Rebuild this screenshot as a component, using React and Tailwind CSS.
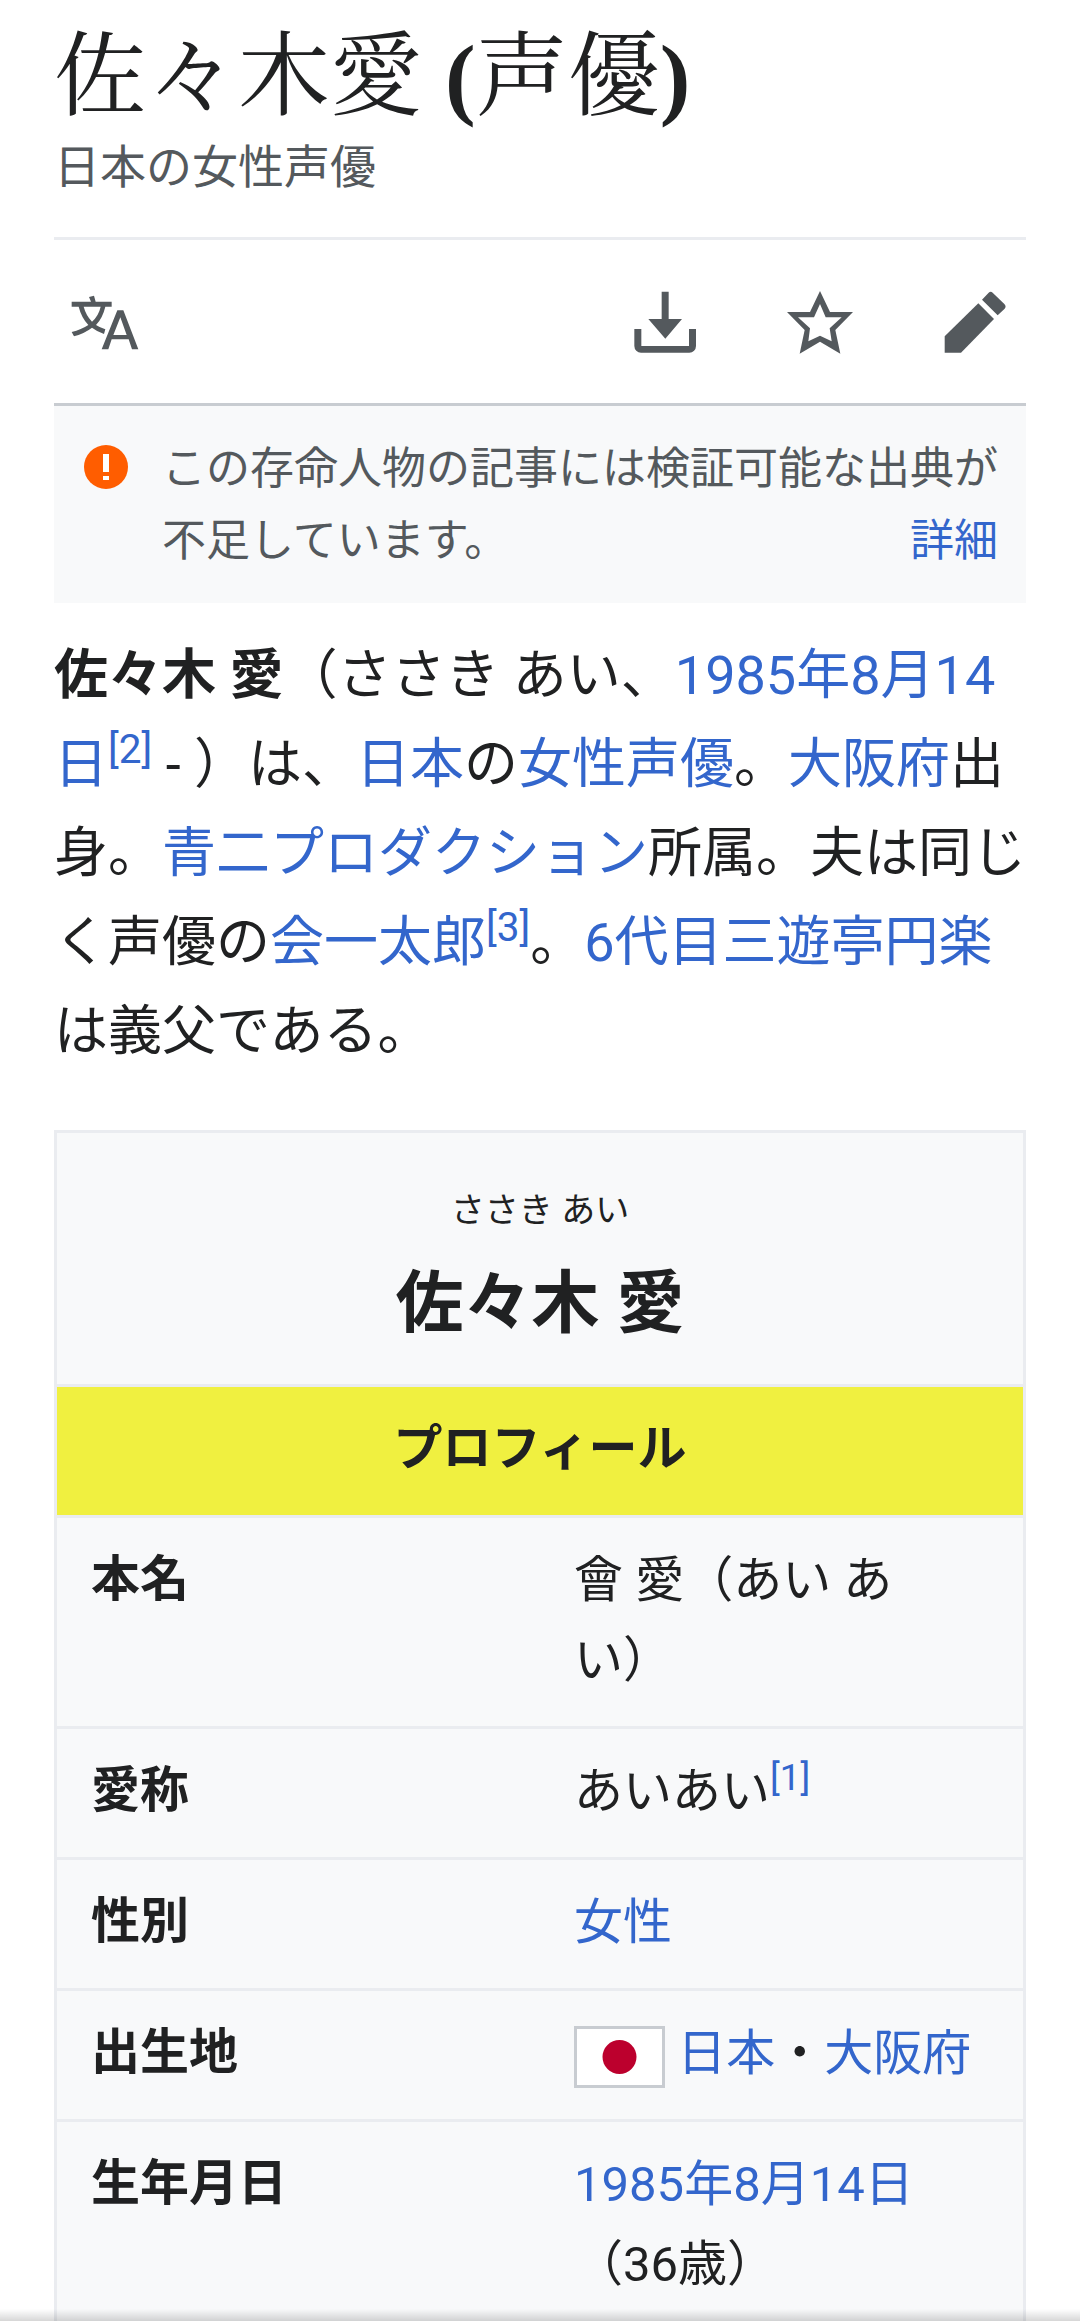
import React from 'react';

const iconButton = 'block size-[72px] text-[#54595d]';

const LanguageIcon = () => (
  <svg viewBox="85 196 216 216" className="size-full" fill="currentColor" aria-hidden="true">
    <path d="M151 243L145 229L160 225L165 243H213V258H194Q186 292 166 313Q178 321 194 326L190 340Q170 333 154 321Q132 338 100 347L93 334Q122 327 143 313Q122 290 114 258H93V243ZM129 258Q136 284 154 303Q174 285 180 258Z" fillRule="evenodd" />
    <path d="M183 386L230 269H248L293 386H274L264 356H213L203 386ZM218 343H258L239 290Z" fillRule="evenodd" />
  </svg>
);

const DownloadIcon = () => (
  <svg viewBox="207 196 216 216" className="size-full" fill="currentColor" aria-hidden="true">
    <path d="M305 213H326V295H366L316 354L265 295H305Z" />
    <path d="M223 325H244V376H387V325H408V376A20 20 0 0 1 388 396H243A20 20 0 0 1 223 376Z" />
  </svg>
);

const StarIcon = () => (
  <svg viewBox="674 196 216 216" className="size-full" fill="currentColor" aria-hidden="true">
    <path
      fillRule="evenodd"
      d="M782 211L812 274H881L828 328L843 399L782 363L721 399L736 328L683 274H752ZM782 250L764 290H716L752 323L747 362L782 345L817 362L811 323L847 290H799Z"
    />
  </svg>
);

const EditIcon = () => (
  <svg viewBox="1138 196 216 216" className="size-full" fill="currentColor" aria-hidden="true">
    <path d="M1155 347L1256 248L1303 295L1204 396H1155Z" />
    <path d="M1267 237L1287 216Q1293 210 1299 216L1334 250Q1341 257 1335 264L1314 284Z" />
  </svg>
);

const Link = ({ children, className = '' }) => (
  <a href="#" className={`text-[#3366cc] ${className}`}>{children}</a>
);

const Ref = ({ n }) => (
  <sup>
    <Link>{`[${n}]`}</Link>
  </sup>
);

const JapanFlag = () => (
  <svg
    viewBox="0 0 85 56"
    className="inline-block h-[62px] w-[91px] border-3 border-[#c8ccd1] bg-white align-middle"
    role="img"
    aria-label="日本の旗"
  >
    <circle cx="42.5" cy="28" r="17" fill="#bc002d" />
  </svg>
);

const profile = [
  { label: '本名', value: <>會 愛（あい あ<br />い）</> },
  { label: '愛称', value: <>あいあい<Ref n={1} /></> },
  { label: '性別', value: <Link>女性</Link> },
  { label: '出生地', value: <><JapanFlag /> <Link>日本</Link>・<Link>大阪府</Link></> },
  { label: '生年月日', value: <><Link>1985年8月14日</Link>（36歳）</> }
];

const App = () => {
  return (
    <div
      lang="ja"
      className="relative h-screen overflow-hidden bg-white px-[54px] font-['Roboto','Noto_Sans_CJK_JP',sans-serif] text-[#202122]"
    >
      {/* Heading */}
      <header className="border-b-3 border-[#eaecf0] pt-2 pb-10">
        <h1 className="font-['Noto_Serif_CJK_JP','Liberation_Serif','Noto_Sans_CJK_JP',serif] text-[92px] leading-[120px]">
          佐々木愛
          <span className="font-['Liberation_Serif',serif] leading-none font-bold"> (</span>
          声優
          <span className="font-['Liberation_Serif',serif] leading-none font-bold">)</span>
        </h1>
        <p className="mt-[9px] text-[46px] leading-[60px] text-[#54595d]">日本の女性声優</p>
      </header>

      {/* Page actions */}
      <nav className="flex h-[166px] items-center justify-between border-b-3 border-[#c8ccd1] px-[15px]">
        <button type="button" className={iconButton} aria-label="言語"><LanguageIcon /></button>
        <div className="flex gap-[83px]">
          <button type="button" className={iconButton} aria-label="ダウンロード"><DownloadIcon /></button>
          <button type="button" className={iconButton} aria-label="ウォッチ"><StarIcon /></button>
          <button type="button" className={iconButton} aria-label="編集"><EditIcon /></button>
        </div>
      </nav>

      {/* Notice */}
      <div className="flex bg-[#f8f9fa] pt-[27px] pr-7 pb-[26px] pl-[30px] text-[44px] leading-[72px] text-[#54595d]">
        <svg viewBox="0 0 44 44" className="mt-3 mr-[34px] size-11 shrink-0" aria-hidden="true">
          <circle cx="22" cy="22" r="22" fill="#ff5d00" />
          <path d="M19 9h6v18h-6zM19 31h6v4h-6z" fill="#fff" />
        </svg>
        <p className="flex-1">
          この存命人物の記事には検証可能な出典が不足しています。
          <Link className="float-right">詳細</Link>
        </p>
      </div>

      {/* Lead */}
      <p className="mt-7 text-[54px] leading-[89px]">
        <b>佐々木 愛</b>（ささき あい、<Link>1985年8月14日</Link><Ref n={2} /> - ）は、<Link>日本</Link>の
        <Link>女性声優</Link>。<Link>大阪府</Link>出身。<Link>青二プロダクション</Link>所属。夫は同じく声優の
        <Link>会一太郎</Link><Ref n={3} />。<Link>6代目三遊亭円楽</Link>は義父である。
      </p>

      {/* Infobox */}
      <table className="mt-[54px] w-full table-fixed border-separate border-spacing-0 border-3 border-[#eaecf0] bg-[#f8f9fa] text-[49px] leading-[80px]">
        <tbody>
          <tr>
            <th colSpan={2} className="pt-[49px] pb-6 text-center">
              <div className="text-[34px] leading-[56px] font-normal">ささき あい</div>
              <div className="mt-[11px] text-[68px] leading-[111px] font-bold">佐々木 愛</div>
            </th>
          </tr>
          <tr>
            <th colSpan={2} className="border-y-3 border-[#eaecf0] bg-[#f0f040] bg-clip-padding pt-[22px] pb-[26px] text-center font-bold">
              プロフィール
            </th>
          </tr>
          {profile.map((row) => (
            <tr key={row.label}>
              <th className="border-b-3 border-[#eaecf0] px-[34px] pt-[22px] pb-[26px] text-left align-top font-bold">{row.label}</th>
              <td className="border-b-3 border-[#eaecf0] pt-[23px] pr-9 pb-[25px] pl-[34px] align-top">{row.value}</td>
            </tr>
          ))}
        </tbody>
      </table>

      {/* Shadow of the bar below the viewport */}
      <div className="absolute inset-x-0 bottom-0 h-3 bg-linear-to-t from-black/16 to-transparent" />
    </div>
  );
};

export default App;
